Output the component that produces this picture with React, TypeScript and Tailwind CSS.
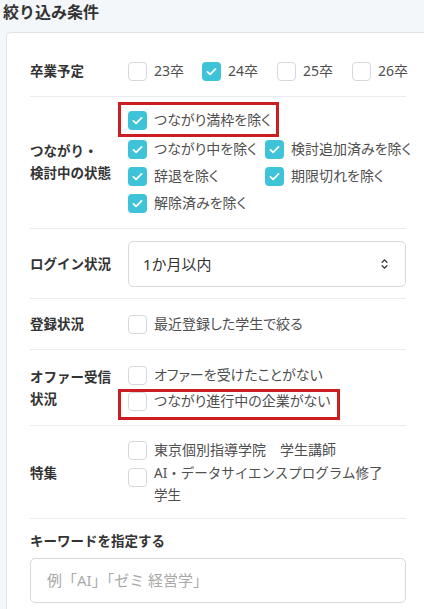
import React from "react";

const FONT = "font-['Noto_Sans','Noto_Sans_CJK_JP',sans-serif]";

const Box: React.FC<{ checked?: boolean }> = ({ checked }) =>
  checked ? (
    <span className="flex h-[19px] w-[19px] shrink-0 items-center justify-center rounded-[4px] bg-[#3ec3d8]">
      <svg viewBox="0 0 16 16" className="h-[13px] w-[13px]" fill="none">
        <path d="M3 8.4l3.3 3.2L13 4.8" stroke="#fff" strokeWidth="2.2" strokeLinecap="round" strokeLinejoin="round" />
      </svg>
    </span>
  ) : (
    <span className="block h-[19px] w-[19px] shrink-0 rounded-[4px] border border-[#d4d8dc] bg-white" />
  );

interface OptionProps {
  label: string;
  checked?: boolean;
  // classes placing the red annotation frame around the option
  mark?: string;
}

const Option: React.FC<OptionProps> = ({ label, checked, mark }) => (
  <div className="relative flex w-fit items-center gap-[7px]">
    <Box checked={checked} />
    <span className="whitespace-nowrap text-[14px] leading-[22px] text-[#4f4f4f] [font-feature-settings:'palt']">
      {label}
    </span>
    {mark && <span className={`pointer-events-none absolute border-[3px] border-[#cc1e22] ${mark}`} />}
  </div>
);

const Label: React.FC<{ children: React.ReactNode }> = ({ children }) => (
  <div className="w-[98px] shrink-0 text-[13.5px] font-bold leading-[22px] text-[#333]">{children}</div>
);

const App: React.FC = () => {
  return (
    <div className={`${FONT} h-[609px] overflow-hidden bg-[#f4f7fa]`}>
      {/* Header */}
      <div className="h-[32px] pl-[3px] pt-[1px] text-[16px] font-bold leading-[22px] text-[#333]">
        絞り込み条件
      </div>

      {/* Card */}
      <div className="ml-[6px] rounded-tl-[5px] border-y border-l border-[#dfe3e7] bg-white pl-[23px] pr-[18px] pt-[13px]">
        {/* 卒業予定 */}
        <div className="flex items-center border-b border-[#e9ebee] py-[14px]">
          <Label>卒業予定</Label>
          <div className="flex">
            <div className="w-[74px] shrink-0">
              <Option label="23卒" />
            </div>
            <div className="w-[75px] shrink-0">
              <Option label="24卒" checked />
            </div>
            <div className="w-[75px] shrink-0">
              <Option label="25卒" />
            </div>
            <div className="shrink-0">
              <Option label="26卒" />
            </div>
          </div>
        </div>

        {/* つながり・検討中の状態 */}
        <div className="flex items-center border-b border-[#e9ebee] pb-[14px] pt-[12px]">
          <Label>
            つながり・
            <br />
            検討中の状態
          </Label>
          <div className="flex flex-col gap-[5px]">
            <div className="mb-[2px]">
              <Option
                label="つながり満枠を除く"
                checked
                mark="-left-[10px] -right-[8px] -top-[7px] -bottom-[6px]"
              />
            </div>
            <div className="grid grid-cols-[137px_1fr] gap-y-[5px]">
              <Option label="つながり中を除く" checked />
              <Option label="検討追加済みを除く" checked />
              <Option label="辞退を除く" checked />
              <Option label="期限切れを除く" checked />
              <Option label="解除済みを除く" checked />
            </div>
          </div>
        </div>

        {/* ログイン状況 */}
        <div className="flex items-center border-b border-[#e9ebee] pb-[11px] pt-[12px]">
          <Label>ログイン状況</Label>
          <div className="flex h-[46px] flex-1 items-center justify-between rounded-[5px] border border-[#d6dade] pl-[14px] pr-[17px]">
            <span className="text-[15px] text-[#333]">1か月以内</span>
            <svg viewBox="0 0 8 14" className="h-[12px] w-[7px]" fill="none">
              <path d="M1.2 5L4 2.2 6.8 5M1.2 9L4 11.8 6.8 9" stroke="#333" strokeWidth="1.5" strokeLinecap="round" strokeLinejoin="round" />
            </svg>
          </div>
        </div>

        {/* 登録状況 */}
        <div className="flex items-center border-b border-[#e9ebee] pb-[14px] pt-[14px]">
          <Label>登録状況</Label>
          <Option label="最近登録した学生で絞る" />
        </div>

        {/* オファー受信状況 */}
        <div className="flex items-center border-b border-[#e9ebee] pb-[13px] pt-[14px]">
          <Label>
            オファー受信
            <br />
            状況
          </Label>
          <div className="flex flex-col gap-[4px]">
            <Option label="オファーを受けたことがない" />
            <Option
              label="つながり進行中の企業がない"
              mark="-left-[10px] -right-[10px] -top-[1px] -bottom-[8px]"
            />
          </div>
        </div>

        {/* 特集 */}
        <div className="flex items-center border-b border-[#e9ebee] pb-[12px] pt-[13px]">
          <Label>特集</Label>
          <div className="flex flex-1 flex-col gap-[1px]">
            <Option label="東京個別指導学院　学生講師" />
            <div className="flex items-start gap-[7px]">
              <span className="mt-[6px]">
                <Box />
              </span>
              <span className="text-[13.5px] leading-[22px] text-[#4f4f4f]">
                AI・データサイエンスプログラム修了
                <br />
                学生
              </span>
            </div>
          </div>
        </div>

        {/* キーワード */}
        <div className="pb-[20px] pt-[11px]">
          <div className="text-[13.5px] font-bold leading-[22px] text-[#333]">キーワードを指定する</div>
          <div className="mt-[6px] flex h-[45px] items-center rounded-[5px] border border-[#d6dade] pl-[16px]">
            <span className="text-[15px] text-[#a9a9a9]">例「AI」「ゼミ 経営学」</span>
          </div>
        </div>
      </div>
    </div>
  );
};

export default App;
